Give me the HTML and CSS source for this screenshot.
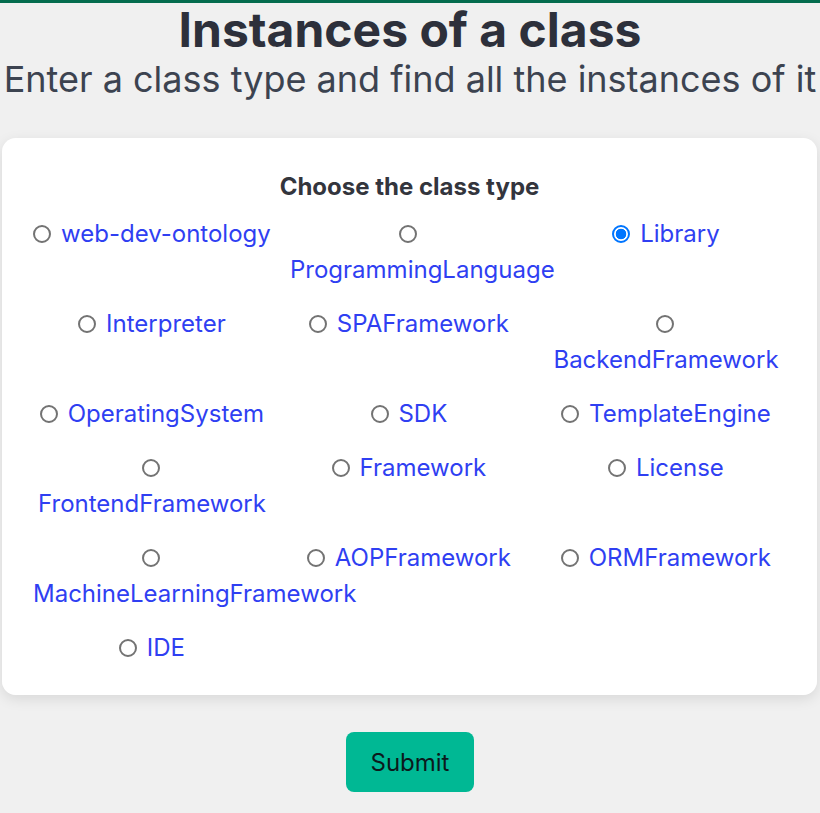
FILE: index.html
```html
<!DOCTYPE html>
<html>
<head>
<meta charset="utf-8">
<link rel="stylesheet" href="styles.css">
</head>
<body>
<header class="hero">
  <h1 class="title">Instances of a class</h1>
  <p class="subtitle">Enter a class type and find all the instances of it</p>
</header>
<form class="form">
  <fieldset class="card">
    <legend class="card-title">Choose the class type</legend>
    <div class="options">
      <label class="option"><input type="radio" name="cls"> web-dev-ontology</label>
      <label class="option"><input type="radio" name="cls"> ProgrammingLanguage</label>
      <label class="option"><input type="radio" name="cls" checked> Library</label>
      <label class="option"><input type="radio" name="cls"> Interpreter</label>
      <label class="option"><input type="radio" name="cls"> SPAFramework</label>
      <label class="option"><input type="radio" name="cls"> BackendFramework</label>
      <label class="option"><input type="radio" name="cls"> OperatingSystem</label>
      <label class="option"><input type="radio" name="cls"> SDK</label>
      <label class="option"><input type="radio" name="cls"> TemplateEngine</label>
      <label class="option"><input type="radio" name="cls"> FrontendFramework</label>
      <label class="option"><input type="radio" name="cls"> Framework</label>
      <label class="option"><input type="radio" name="cls"> License</label>
      <label class="option"><input type="radio" name="cls"> MachineLearningFramework</label>
      <label class="option"><input type="radio" name="cls"> AOPFramework</label>
      <label class="option"><input type="radio" name="cls"> ORMFramework</label>
      <label class="option"><input type="radio" name="cls"> IDE</label>
    </div>
  </fieldset>
  <div class="actions">
    <button type="button" class="submit">Submit</button>
  </div>
</form>
</body>
</html>
```

FILE: styles.css
```css
html, body {
  margin: 0;
  padding: 0;
}
body {
  background: #f0f0f0;
  border-top: 3px solid #046c4e;
  font-family: Inter, "Noto Sans", sans-serif;
  color: #2d313b;
}
.hero {
  text-align: center;
}
.title {
  margin: 0;
  font-size: 48px;
  line-height: 54px;
  font-weight: 700;
  color: #2d303b;
}
.subtitle {
  margin: 0;
  font-size: 36px;
  line-height: 44px;
  color: #3c4350;
  white-space: nowrap;
}
.form {
  margin-top: 37px;
}
.card {
  margin: 0 3px 0 2px;
  border: 0;
  background: #fff;
  border-radius: 14px;
  box-shadow: 0 4px 14px rgba(0,0,0,0.10);
  padding: 31px 31px 29px;
  min-width: 0;
}
.card-title {
  float: left;
  width: 100%;
  text-align: center;
  font-size: 24px;
  line-height: 36px;
  font-weight: 700;
  color: #33353d;
  padding: 0;
  margin-bottom: 11px;
}
.options {
  clear: both;
  display: grid;
  grid-template-columns: repeat(3, 238px);
  column-gap: 19px;
  row-gap: 18px;
}
.option {
  text-align: center;
  font-size: 24px;
  line-height: 36px;
  color: #2f3ff2;
}
.option input {
  -webkit-appearance: none;
  appearance: none;
  box-sizing: border-box;
  width: 18px;
  height: 18px;
  margin: 0 3px 0 0;
  border: 2px solid #737373;
  border-radius: 50%;
  background: #fff;
  vertical-align: -1px;
}
.option input:checked {
  border: 2px solid #0075ff;
  background: radial-gradient(circle, #0075ff 0 5px, #fff 5.6px);
}
.actions {
  display: flex;
  justify-content: center;
  margin-top: 37px;
}
.submit {
  width: 128px;
  height: 60px;
  border: 0;
  border-radius: 8px;
  background: #00b894;
  color: #0c1a1c;
  font-family: Inter, "Noto Sans", sans-serif;
  font-size: 24px;
}
```
